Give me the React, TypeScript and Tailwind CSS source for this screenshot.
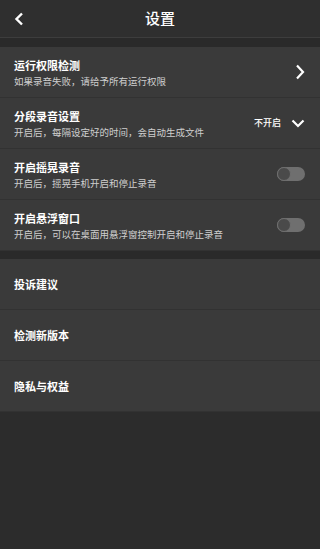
import type { ReactNode } from 'react';

const font = { fontFamily: '"Noto Sans CJK SC", "Noto Sans", sans-serif' };

const Toggle = () => (
  <div className="flex h-[14px] w-[28px] items-center rounded-full bg-[#6f6f6f]">
    <div className="h-[14px] w-[14px] rounded-full border border-[#6f6f6f] bg-[#4a4a4a]" />
  </div>
);

type RowProps = Readonly<{
  title: string;
  sub?: string;
  right?: ReactNode;
}>;

const Row = ({ title, sub, right }: RowProps) => (
  <div className="flex h-[51px] items-center justify-between border-b border-[#323232] bg-[#3a3a3a] pl-[14px] pr-[15px]">
    <div className="flex flex-col">
      <span className="text-[11px] font-bold leading-[16px] text-white">{title}</span>
      {sub && <span className="mt-[2px] text-[9.5px] leading-[13px] text-[#cfcfcf]">{sub}</span>}
    </div>
    {right}
  </div>
);

export default function App() {
  return (
    <div className="flex min-h-[549px] w-[320px] flex-col bg-[#2c2c2c]" style={font}>
      <header className="flex h-[38px] items-center border-b border-[#3d3d3d] bg-[#2f2f2f] px-[14px]">
        <svg width="10" height="14" viewBox="0 0 10 14" className="shrink-0">
          <path d="M8 1.5 L2.5 7 L8 12.5" fill="none" stroke="#fff" strokeWidth="2.4" />
        </svg>
        <h1 className="flex-1 pr-[10px] text-center text-[15px] font-medium text-white">设置</h1>
      </header>
      <div className="h-[9px] bg-[#2a2a2a]" />
      <Row
        title="运行权限检测"
        sub="如果录音失败，请给予所有运行权限"
        right={
          <svg width="10" height="16" viewBox="0 0 10 16">
            <path d="M2 1.5 L8 8 L2 14.5" fill="none" stroke="#fff" strokeWidth="2.2" />
          </svg>
        }
      />
      <Row
        title="分段录音设置"
        sub="开启后，每隔设定好的时间，会自动生成文件"
        right={
          <div className="flex items-center gap-[10px]">
            <span className="text-[9px] font-medium text-white">不开启</span>
            <svg width="14" height="9" viewBox="0 0 14 9">
              <path d="M1.5 1.5 L7 7 L12.5 1.5" fill="none" stroke="#fff" strokeWidth="2.2" />
            </svg>
          </div>
        }
      />
      <Row title="开启摇晃录音" sub="开启后，摇晃手机开启和停止录音" right={<Toggle />} />
      <Row title="开启悬浮窗口" sub="开启后，可以在桌面用悬浮窗控制开启和停止录音" right={<Toggle />} />
      <div className="h-[8px] bg-[#2a2a2a]" />
      <Row title="投诉建议" />
      <Row title="检测新版本" />
      <Row title="隐私与权益" />
    </div>
  );
}
